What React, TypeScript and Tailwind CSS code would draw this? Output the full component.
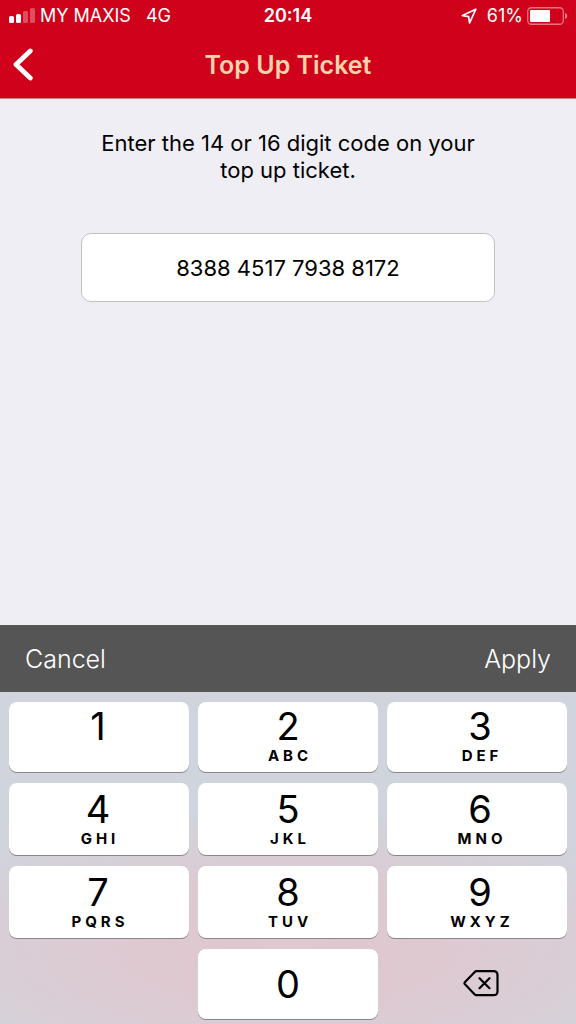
import { useState } from "react";

const rows = [
  [
    { digit: "1", letters: "" },
    { digit: "2", letters: "ABC" },
    { digit: "3", letters: "DEF" },
  ],
  [
    { digit: "4", letters: "GHI" },
    { digit: "5", letters: "JKL" },
    { digit: "6", letters: "MNO" },
  ],
  [
    { digit: "7", letters: "PQRS" },
    { digit: "8", letters: "TUV" },
    { digit: "9", letters: "WXYZ" },
  ],
];

const keyClass =
  "flex flex-col items-center rounded-lg bg-white shadow-[0_1px_0_#85878c] active:bg-gray-200";
const columnClass = ["pr-[2px]", "", "pl-[6px]"];

function StatusBar() {
  return (
    <div className="grid h-8 grid-cols-[1fr_auto_1fr] items-center px-2 text-lg leading-8">
      <div className="flex items-center gap-[5px]">
        <svg width="27" height="16" viewBox="0 0 27 16" fill="#fff" aria-hidden="true">
          <rect x="1" y="8" width="5" height="7" rx="1.5" />
          <rect x="8" y="6" width="5" height="9" rx="1.5" />
          <rect x="15" y="3" width="5" height="12" rx="1.5" opacity="0.3" />
          <rect x="22" y="0" width="5" height="15" rx="1.5" opacity="0.3" />
        </svg>
        <span>MY MAXIS</span>
        <span className="ml-[10px]">4G</span>
      </div>
      <span className="font-semibold">20:14</span>
      <div className="flex items-center justify-end gap-1.5">
        <svg className="mr-1" width="16" height="16" viewBox="0 0 16 16" fill="none" aria-hidden="true">
          <path d="M14.8 1.2 1.4 7.6 7.6 8.6 8.6 15Z" stroke="#fff" strokeWidth="1.7" strokeLinejoin="round" />
        </svg>
        <div className="flex items-center gap-1">
          <span>61%</span>
          <svg width="41" height="18" viewBox="0 0 41 18" fill="none" aria-hidden="true">
            <rect x="0.75" y="0.75" width="35.5" height="16.5" rx="3.5" stroke="#fff" strokeOpacity="0.45" strokeWidth="1.3" />
            <rect x="3" y="3" width="20" height="12" rx="1" fill="#fff" />
            <path d="M38 6c3 .8 3 5.2 0 6Z" fill="#fff" fillOpacity="0.5" />
          </svg>
        </div>
      </div>
    </div>
  );
}

export default function App() {
  const [code, setCode] = useState("8388451779388172");
  const shown = code.replace(/(.{4})(?=.)/g, "$1 ");
  const press = (digit: string) => setCode((c) => (c + digit).slice(0, 16));

  return (
    <div className="flex min-h-screen flex-col bg-[#efeef4] font-[Inter,sans-serif] text-black">
      <header className="border-b border-[#bb8591] bg-[#d0021b] text-white">
        <StatusBar />
        <div className="grid h-[66px] grid-cols-[48px_1fr_48px] items-center">
          <button type="button" aria-label="Back" className="flex h-full items-center pl-3">
            <svg width="22" height="34" viewBox="0 0 22 34" fill="none" aria-hidden="true">
              <path d="M18.3 3 4 16.5 18.3 30" stroke="#fff" strokeWidth="4.8" strokeLinecap="round" strokeLinejoin="round" />
            </svg>
          </button>
          <h1 className="text-center text-[25px] font-semibold leading-8 text-[#ffd3ac]">Top Up Ticket</h1>
        </div>
      </header>

      <main className="flex flex-1 flex-col items-center px-[81px] pt-[31px]">
        <label htmlFor="code" className="max-w-[400px] text-center text-[22px] leading-[27px]">
          Enter the 14 or 16 digit code on your top up ticket.
        </label>
        <input
          id="code"
          inputMode="numeric"
          value={shown}
          onChange={(e) => setCode(e.target.value.replace(/\D/g, "").slice(0, 16))}
          className="mt-[49px] h-[69px] w-full rounded-[10px] border border-[#c2c2c2] bg-white text-center text-[22px] outline-none"
        />
      </main>

      <section aria-label="Keypad">
        <div className="flex h-[67px] items-center justify-between bg-[#555556] px-[25px] pt-[2px] text-[25px] font-light text-white">
          <button type="button">Cancel</button>
          <button type="button">Apply</button>
        </div>
        <div className="grid grid-cols-3 grid-rows-[70px_72px_72px_70px] gap-x-[9px] gap-y-[11px] bg-[radial-gradient(ellipse_70%_42%_at_50%_77%,#dfc8d0,#dec9d1_40%,#dfc8d000),linear-gradient(#d0d4dd,#d0d4dc_40%,#d5d2da)] px-[9px] pt-[10px] pb-[5px]">
          {rows.flatMap((row) =>
            row.map(({ digit, letters }, column) => (
              <button
                key={digit}
                type="button"
                onClick={() => press(digit)}
                className={`${keyClass} ${columnClass[column]} justify-end pb-[7px]`}
              >
                <span className="text-[38px] leading-[42px]">{digit}</span>
                <span className="h-[18px] pl-1 text-[15px] font-bold leading-[18px] tracking-[4px]">{letters}</span>
              </button>
            )),
          )}
          <button type="button" onClick={() => press("0")} className={`${keyClass} col-start-2 justify-center`}>
            <span className="text-[38px] leading-[42px]">0</span>
          </button>
          <button
            type="button"
            aria-label="Delete"
            onClick={() => setCode((c) => c.slice(0, -1))}
            className="flex items-center justify-center pl-[8px]"
          >
            <svg width="36" height="28" viewBox="0 0 36 28" fill="none" stroke="#000" strokeWidth="2.2" strokeLinecap="round" strokeLinejoin="round" aria-hidden="true">
              <path d="M13.5 1.2H30.5Q34.5 1.2 34.5 5.2V21.2Q34.5 25.2 30.5 25.2H13.5Q12.5 25.2 11.5 24.2L2 14.3Q1 13.2 2 12.1L11.5 2.2Q12.5 1.2 13.5 1.2Z" />
              <path d="M16.5 8.2 26.5 18.2M26.5 8.2 16.5 18.2" />
            </svg>
          </button>
        </div>
      </section>
    </div>
  );
}
